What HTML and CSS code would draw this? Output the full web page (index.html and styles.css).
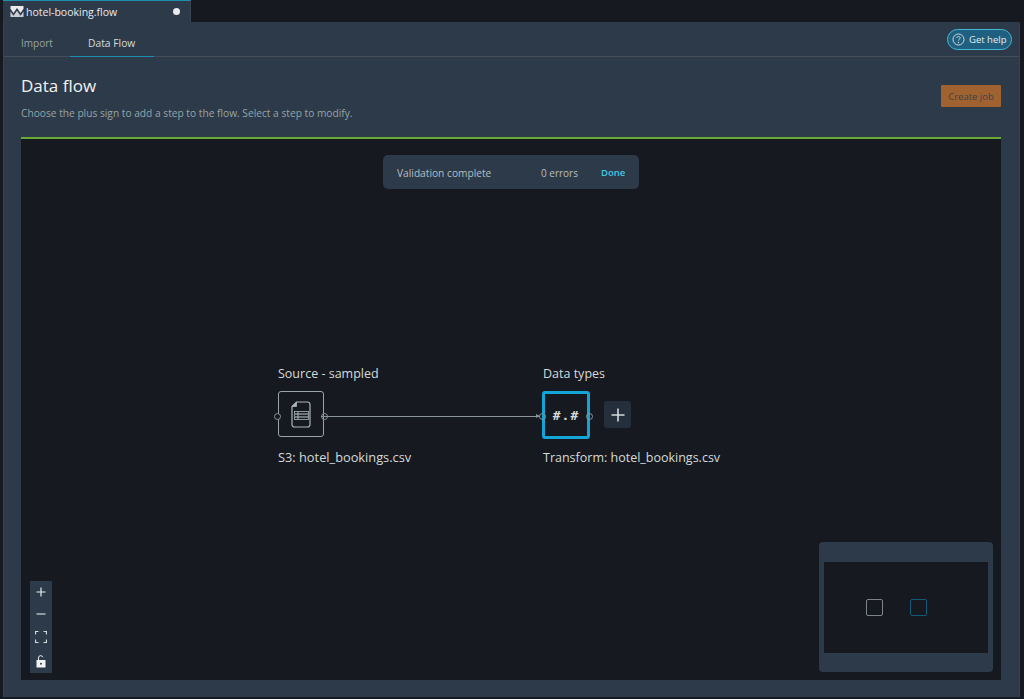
FILE: index.html
```html
<!DOCTYPE html>
<html lang="en">
<head>
<meta charset="utf-8">
<title>hotel-booking.flow</title>
<link rel="stylesheet" href="styles.css">
</head>
<body>
<div class="window">
  <div class="file-tab">
    <svg class="file-icon" width="14" height="13" viewBox="0 0 15 13"><path d="M1 .5H14A.6.6 0 0 1 14.500 1V3.500L11.300 8L7.500 2.800L3.700 8L.5 3.500V1A.6.6 0 0 1 1 .5Z" fill="#e9ebed"/><path d="M.5 6.500L3.700 11L7.500 5.800L11.300 11L14.500 6.500V12A.6.6 0 0 1 14 12.500H1A.6.6 0 0 1 .5 12Z" fill="#c9ced2"/></svg>
    <span class="file-name">hotel-booking.flow</span>
    <span class="dirty-dot"></span>
  </div>
  <div class="panel">
    <div class="tabs">
      <div class="tab">Import</div>
      <div class="tab tab-active">Data Flow</div>
      <div class="help">
        <svg width="13" height="13" viewBox="0 0 13 13"><circle cx="6.500" cy="6.500" r="5.500" fill="none" stroke="#d5dbdb" stroke-width="1"/><path d="M4.800 5.100C4.800 4 5.600 3.500 6.500 3.500S8.200 4.100 8.200 5C8.200 6.100 6.500 6.200 6.500 7.500" fill="none" stroke="#d5dbdb" stroke-width="1"/><circle cx="6.500" cy="9.400" r=".7" fill="#d5dbdb"/></svg>
        <span>Get help</span>
      </div>
    </div>
    <div class="header">
      <div class="header-text">
        <h1>Data flow</h1>
        <p>Choose the plus sign to add a step to the flow. Select a step to modify.</p>
      </div>
      <div class="create-job">Create job</div>
    </div>
    <div class="canvas">
      <div class="validation">
        <span class="val-title">Validation complete</span>
        <span class="val-count">0 errors</span>
        <span class="val-done">Done</span>
      </div>

      <div class="node-label label-source-top">Source - sampled</div>
      <div class="node node-source">
        <svg width="20" height="27" viewBox="0 0 20 27"><path d="M5.500 1H16.500A2.500 2.500 0 0 1 19 3.500V23.500A2.500 2.500 0 0 1 16.500 26H3.500A2.500 2.500 0 0 1 1 23.500V5.500Z" fill="none" stroke="#aab7b8" stroke-width="1.200"/><rect x="3.500" y="10.500" width="14" height="8" fill="#16191f" stroke="#aab7b8" stroke-width=".8"/><path d="M4 13H17M4 16H17" stroke="#c4cccc" stroke-width="1.200"/><path d="M7 10.500V18.500" stroke="#aab7b8" stroke-width="1"/><path d="M5.500 1V5.500H1" fill="#aab7b8" stroke="#aab7b8" stroke-width=".8"/></svg>
      </div>
      <div class="port port-a"></div>
      <div class="edge"></div>
      <div class="port port-b"></div>
      <div class="arrow"></div>
      <div class="node-label label-source-bottom">S3: hotel_bookings.csv</div>

      <div class="node-label label-transform-top">Data types</div>
      <div class="node node-transform">#.#</div>
      <div class="port port-c"></div>
      <div class="port port-d"></div>
      <div class="add-step">
        <svg width="14" height="14" viewBox="0 0 14 14"><path d="M7 .5V13.500M.5 7H13.500" stroke="#d5dbdb" stroke-width="1.600"/></svg>
      </div>
      <div class="node-label label-transform-bottom">Transform: hotel_bookings.csv</div>

      <div class="zoom-controls">
        <svg width="10" height="10" viewBox="0 0 10 10"><path d="M5 .5V9.500M.5 5H9.500" stroke="#e9ebed" stroke-width="1.200"/></svg>
        <svg width="10" height="10" viewBox="0 0 10 10"><path d="M.5 5H9.500" stroke="#d5dbdb" stroke-width="1.200"/></svg>
        <svg width="12" height="12" viewBox="0 0 12 12"><path d="M.5 3.500V.5H3.500M8.500 .5H11.500V3.500M11.500 8.500V11.500H8.500M3.500 11.500H.5V8.500" fill="none" stroke="#d5dbdb" stroke-width="1.200"/></svg>
        <svg width="10" height="13" viewBox="0 0 10 13"><path d="M2.500 5V3A2.200 2.200 0 0 1 6.800 2.200" fill="none" stroke="#e9ebed" stroke-width="1"/><path fill-rule="evenodd" d="M.5 5H9.500V12.500H.5ZM5 7.800A1 1 0 1 0 5 9.800A1 1 0 1 0 5 7.800Z" fill="#f2f3f3"/></svg>
      </div>

      <div class="minimap">
        <div class="minimap-view">
          <div class="mini-node mini-source"></div>
          <div class="mini-node mini-transform"></div>
        </div>
      </div>
    </div>
  </div>
</div>
</body>
</html>
```
FILE: styles.css
```css
* { box-sizing: border-box; }
html, body { margin: 0; padding: 0; height: 100%; }
body {
  background: #16191f;
  font-family: "Open Sans", "Noto Sans", sans-serif;
  color: #d5dbdb;
  overflow: hidden;
}
.window {
  width: 1024px;
  height: 699px;
  padding: 0 3px 2px 3px;
  display: flex;
  flex-direction: column;
}
.file-tab {
  width: 188px;
  height: 22px;
  flex: none;
  background: #2d3a4a;
  border-top: 1px solid #1f8fb0;
  border-right: 1px solid #3a4350;
  display: flex;
  align-items: center;
  padding-left: 7px;
  font-size: 10.500px;
  color: #e9ebed;
}
.file-icon { flex: none; margin-right: 2px; }
.file-name { flex: 1; }
.dirty-dot {
  width: 7px;
  height: 7px;
  border-radius: 50%;
  background: #e9ebed;
  margin-right: 10px;
}
.panel {
  flex: 1;
  width: 1017px;
  background: #2d3a4a;
  display: flex;
  flex-direction: column;
  border-radius: 0 2px 0 0;
  border-left: 1px solid #3a4350;
  border-right: 1px solid #3a4350;
  padding-bottom: 17px;
}
.tabs {
  height: 35px;
  flex: none;
  display: flex;
  align-items: stretch;
  border-bottom: 1px solid #454d58;
}
.tab {
  font-size: 10px;
  color: #95a5a6;
  padding: 7px 0 0 17px;
  display: flex;
  align-items: center;
  width: 66px;
}
.tab-active {
  color: #d5dbdb;
  width: 84px;
  padding-left: 18px;
  font-size: 10.300px;
  border-bottom: 1px solid #1f8fb0;
  margin-bottom: -1px;
}
.help {
  margin-left: auto;
  margin-right: 7px;
  margin-top: 7px;
  width: 65px;
  height: 21px;
  border: 1px solid #44b9d6;
  border-radius: 11px;
  background: #1f5f7f;
  display: flex;
  align-items: center;
  gap: 4px;
  padding-left: 4px;
  font-size: 9.500px;
  font-weight: 500;
  color: #eaeded;
}
.help svg { flex: none; }
.header {
  height: 80px;
  flex: none;
  display: flex;
  justify-content: space-between;
  padding: 0 18px 0 17px;
}
.header-text h1 {
  margin: 17px 0 0;
  font-size: 17px;
  line-height: 24px;
  font-weight: 500;
  color: #f2f3f3;
}
.header-text p {
  margin: 8px 0 0;
  font-size: 10.200px;
  line-height: 14px;
  color: #95a5a6;
}
.create-job {
  margin-top: 28px;
  width: 60px;
  height: 22px;
  background: #a0622e;
  border-radius: 1px;
  font-size: 9.500px;
  font-weight: 500;
  color: #3d444b;
  display: flex;
  align-items: center;
  justify-content: center;
}
.canvas {
  margin: 0 18px 0 17px;
  flex: 1;
  background: #16191f;
  border-top: 2px solid #6aaa35;
  position: relative;
}
.validation {
  position: absolute;
  left: 362px;
  top: 16px;
  width: 256px;
  height: 34px;
  background: #2d3a4a;
  border-radius: 5px;
  display: flex;
  align-items: center;
  padding: 1px 0 0 14px;
  font-size: 10.200px;
}
.val-title { width: 144px; color: #b4bfc0; }
.val-count { width: 60px; color: #b4bfc0; font-size: 10px; }
.val-done { color: #44c8e0; font-weight: 600; font-size: 9.500px; }
.node-label {
  position: absolute;
  font-size: 12.500px;
  line-height: 16px;
  color: #d5dbdb;
  white-space: nowrap;
}
.label-source-top { left: 257px; top: 227px; }
.label-source-bottom { left: 257px; top: 310px; font-size: 12.800px; }
.label-transform-top { left: 522px; top: 227px; }
.label-transform-bottom { left: 522px; top: 311px; }
.node {
  position: absolute;
  width: 46px;
  height: 46px;
  display: flex;
  align-items: center;
  justify-content: center;
  top: 252px;
}
.node-source {
  left: 257px;
  border: 1px solid #9aa5a8;
  border-radius: 3px;
}
.node-transform {
  left: 521px;
  width: 48px;
  height: 48px;
  border: 3px solid #12a5d6;
  border-radius: 3px;
  font-family: "DejaVu Sans Mono", "Liberation Mono", monospace;
  font-weight: 700;
  font-size: 13px;
  letter-spacing: 1px;
  color: #d5dbdb;
}
.port {
  position: absolute;
  width: 7px;
  height: 7px;
  border-radius: 50%;
  border: 1px solid #8a9499;
  top: 274px;
}
.port-a { left: 253px; background: #16191f; }
.port-b { left: 300px; }
.port-c { left: 518px; }
.port-d { left: 565px; }
.edge {
  position: absolute;
  left: 300px;
  top: 277px;
  width: 219px;
  height: 1px;
  background: #8a9499;
}
.arrow {
  position: absolute;
  left: 515px;
  top: 275px;
  width: 0;
  height: 0;
  border-left: 4px solid #8a9499;
  border-top: 2.500px solid transparent;
  border-bottom: 2.500px solid transparent;
}
.add-step {
  position: absolute;
  left: 583px;
  top: 262px;
  width: 27px;
  height: 27px;
  border-radius: 3px;
  background: #252f3c;
  display: flex;
  align-items: center;
  justify-content: center;
}
.zoom-controls {
  position: absolute;
  left: 9px;
  top: 442px;
  width: 22px;
  height: 92px;
  background: #2d3a4a;
  display: flex;
  flex-direction: column;
  align-items: center;
  justify-content: space-between;
  padding: 6px 0 5px;
}
.minimap {
  position: absolute;
  right: 8px;
  bottom: 8px;
  width: 174px;
  height: 130px;
  background: #2d3a4a;
  border-radius: 4px;
  padding: 20px 5px 19px;
}
.minimap-view {
  height: 91px;
  background: #16191f;
  position: relative;
}
.mini-node {
  position: absolute;
  top: 37px;
  width: 17px;
  height: 17px;
  border-radius: 2px;
  border: 1.500px solid #7e8488;
}
.mini-source { left: 42px; }
.mini-transform { left: 86px; border-color: #115a78; }
```
